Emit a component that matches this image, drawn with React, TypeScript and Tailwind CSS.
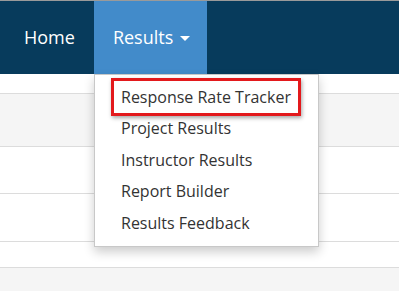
import React from 'react'

const ITEMS = ['Response Rate Tracker', 'Project Results', 'Instructor Results', 'Report Builder', 'Results Feedback']

export default function App() {
  return (
    <div className="relative h-[291px] w-[399px] overflow-hidden bg-white font-['Open_Sans',sans-serif]">
      <div className="h-px bg-[#9a9a9a]" />
      <nav className="flex h-[73px] bg-[#073b5c] pl-[5px] text-[18px] text-white">
        <a className="flex items-center px-[19px]">Home</a>
        <a className="flex w-[113px] items-center bg-[#428bca] px-[19px]">
          Results
          <span className="ml-[7px] mt-[2px] h-0 w-0 border-x-[5px] border-t-[5px] border-x-transparent border-t-white" />
        </a>
      </nav>

      <div className="h-[20px] border-b border-[#dcdcdc]" />
      <div className="h-[53px] border-b border-[#dcdcdc] bg-[#f5f5f5]" />
      <div className="h-[47px] border-b border-[#dcdcdc]" />
      <div className="h-[48px] border-b border-[#dcdcdc]" />
      <div className="h-[26px] border-b border-[#dcdcdc]" />
      <div className="h-[40px] bg-[#f5f5f5]" />

      <div className="absolute left-[94px] top-[74px] w-[225px] border border-[#c8c8c8] bg-white pb-[7px] pt-[6px] shadow-[0_5px_10px_rgba(0,0,0,0.2)]">
        {ITEMS.map((t) => (
          <div key={t} className="flex h-[31.5px] items-center pl-[26px] text-[16px] text-[#333]">
            {t}
          </div>
        ))}
        <div className="absolute left-[16px] top-[3px] h-[38px] w-[190px] border-[3px] border-[#e3191c] shadow-[1px_2px_4px_rgba(0,0,0,0.35)]" />
      </div>
    </div>
  )
}
